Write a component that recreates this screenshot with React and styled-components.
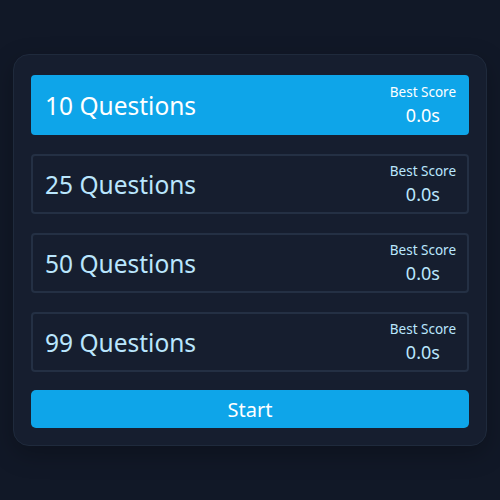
import React, { useState } from 'react';
import styled, { createGlobalStyle } from 'styled-components';

const GlobalStyle = createGlobalStyle`
  html, body {
    margin: 0;
    padding: 0;
    background: #111827;
  }
  body {
    font-family: "Noto Sans", "Open Sans", sans-serif;
  }
`;

const Page = styled.div`
  min-height: 500px;
  display: flex;
  justify-content: center;
  align-items: flex-start;
  padding-top: 54px;
  box-sizing: border-box;
`;

const Card = styled.div`
  width: 474px;
  box-sizing: border-box;
  background: #161e2f;
  border: 1px solid #1f2a3c;
  border-radius: 16px;
  padding: 20px 17px 17px;
  display: flex;
  flex-direction: column;
  gap: 19px;
  box-shadow: 0 8px 24px rgba(0, 0, 0, 0.25);
`;

const Option = styled.button`
  height: 60px;
  box-sizing: border-box;
  border: 2px solid ${p => (p.$active ? '#0ea5e9' : '#243044')};
  background: ${p => (p.$active ? '#0ea5e9' : 'transparent')};
  color: ${p => (p.$active ? '#ffffff' : '#bae6fd')};
  border-radius: 4px;
  padding: 0 11px 0 12px;
  display: flex;
  align-items: center;
  justify-content: space-between;
  font-family: inherit;
  cursor: pointer;
  text-align: left;
`;

const Label = styled.span`
  font-size: 24.5px;
`;

const Score = styled.div`
  display: flex;
  flex-direction: column;
  align-items: center;
  line-height: 1;
`;

const ScoreTitle = styled.span`
  font-size: 13.5px;
  margin-bottom: 7px;
`;

const ScoreValue = styled.span`
  font-size: 18px;
`;

const StartButton = styled.button`
  height: 38px;
  border: none;
  border-radius: 5px;
  background: #0ea5e9;
  color: #ffffff;
  font-family: inherit;
  font-size: 20px;
  cursor: pointer;
  margin-top: -1px;
`;

const counts = [10, 25, 50, 99];

export default function App() {
  const [selected, setSelected] = useState(10);
  return (
    <>
      <GlobalStyle />
      <Page>
        <Card>
          {counts.map(n => (
            <Option key={n} $active={selected === n} onClick={() => setSelected(n)}>
              <Label>{n} Questions</Label>
              <Score>
                <ScoreTitle>Best Score</ScoreTitle>
                <ScoreValue>0.0s</ScoreValue>
              </Score>
            </Option>
          ))}
          <StartButton>Start</StartButton>
        </Card>
      </Page>
    </>
  );
}
